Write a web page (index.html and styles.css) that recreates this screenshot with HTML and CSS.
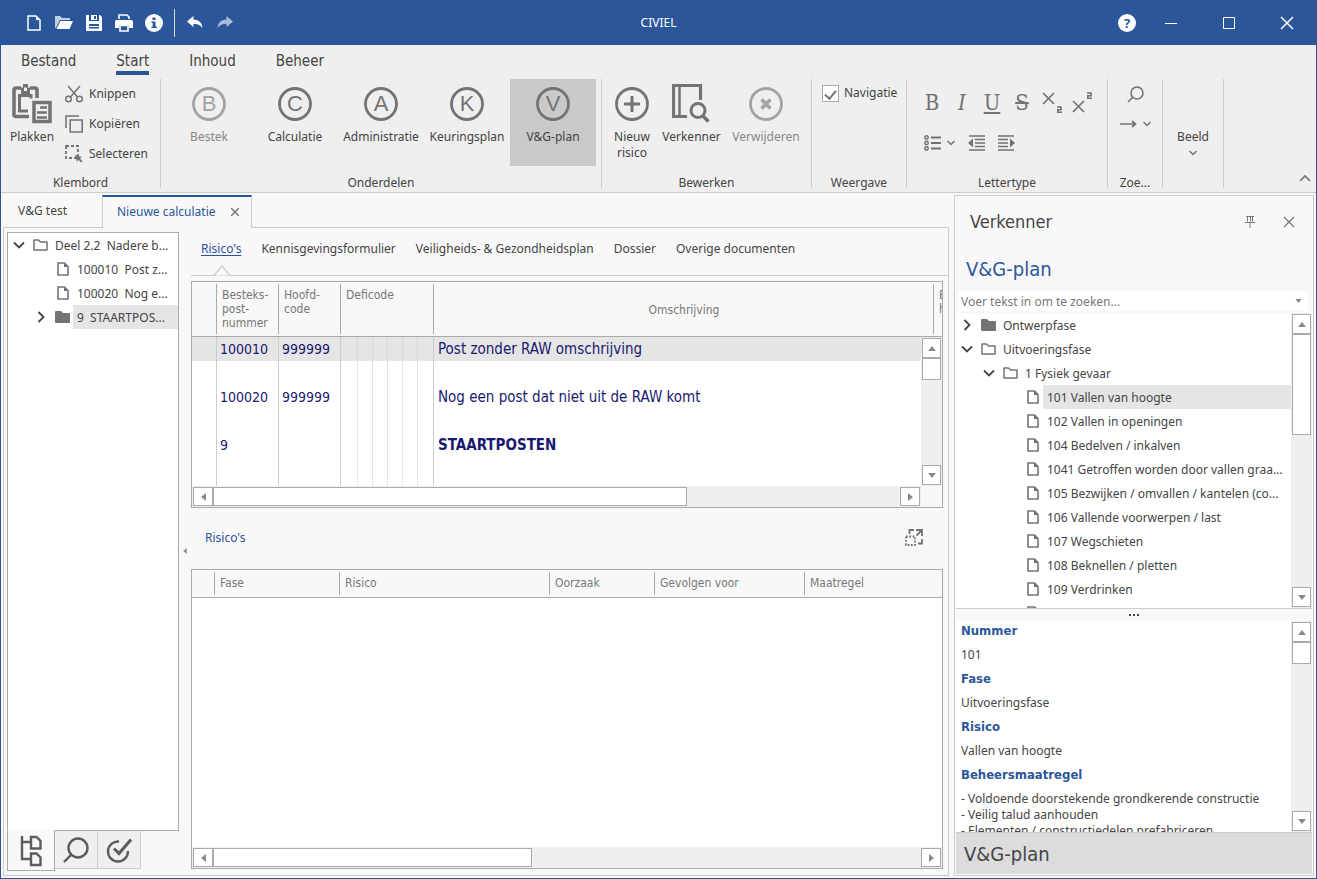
FILE: index.html
```html
<!DOCTYPE html>
<html lang="nl">
<head>
<meta charset="utf-8">
<title>CIVIEL</title>
<link rel="stylesheet" href="styles.css">
</head>
<body>
<svg class="defs" aria-hidden="true">
  <symbol id="doc" viewBox="0 0 12 14"><path d="M1 1h6.500l3.500 3.500V13H1z" fill="none" stroke="#737373" stroke-width="1.600"/><path d="M7 1v4h4z" fill="#737373"/></symbol>
  <symbol id="folder" viewBox="0 0 15 12"><path d="M1 11V1h4.500l2 2H14v8z" fill="none" stroke="#737373" stroke-width="1.500" stroke-linejoin="round"/></symbol>
  <symbol id="folder-full" viewBox="0 0 15 12"><path d="M0 1q0-1 1-1h5l2 2h6q1 0 1 1v8q0 1-1 1H1q-1 0-1-1z" fill="#737373"/></symbol>
  <symbol id="open" viewBox="0 0 12 12"><path d="M1 3.500l5 5 5-5" fill="none" stroke="#444" stroke-width="1.800"/></symbol>
  <symbol id="closed" viewBox="0 0 12 12"><path d="M3.500 1l5 5-5 5" fill="none" stroke="#444" stroke-width="1.800"/></symbol>
  <symbol id="chev" viewBox="0 0 8 6"><path d="M.500 1l3.500 3.500L7.500 1" fill="none" stroke="#737373" stroke-width="1.500"/></symbol>
  <symbol id="ring" viewBox="0 0 34 34"><circle cx="17" cy="17" r="15.500" fill="none" stroke="currentColor" stroke-width="2.800"/></symbol>
  <symbol id="up" viewBox="0 0 8 5"><path d="M0 5l4-5 4 5z" fill="#8a8a8a"/></symbol>
  <symbol id="down" viewBox="0 0 8 5"><path d="M0 0h8L4 5z" fill="#8a8a8a"/></symbol>
  <symbol id="left" viewBox="0 0 5 8"><path d="M5 0v8L0 4z" fill="#8a8a8a"/></symbol>
  <symbol id="right" viewBox="0 0 5 8"><path d="M0 0v8l5-4z" fill="#8a8a8a"/></symbol>
</svg>
<div class="window">
  <header class="titlebar">
    <div class="quick">
      <button class="qbtn" aria-label="Nieuw"><svg width="14" height="16" viewBox="0 0 14 16"><path d="M1 1h8l4 4v10H1z" fill="none" stroke="#fff" stroke-width="1.500"/><path d="M9 1v4h4z" fill="#fff"/></svg></button>
      <button class="qbtn" aria-label="Openen"><svg width="18" height="13" viewBox="0 0 18 13"><path d="M0 12V0h5l2 2h8v2H5L1 12z" fill="#fff" opacity=".7"/><path d="M5.500 5H18l-3.500 8H1.500z" fill="#fff"/></svg></button>
      <button class="qbtn" aria-label="Opslaan"><svg width="16" height="16" viewBox="0 0 16 16"><path d="M0 0h3v6h10V0h1l2 2v14H0zM3 9v4.500h10V9z" fill="#fff" fill-rule="evenodd"/><path d="M5 0h6v5H5zM8 1v3h2V1zM3 11h10v1H3z" fill="#fff" fill-rule="evenodd"/></svg></button>
      <button class="qbtn" aria-label="Afdrukken"><svg width="18" height="18" viewBox="0 0 18 18"><path d="M4 5V1h8l2 2v2" fill="none" stroke="#fff" stroke-width="1.600"/><path d="M1.500 6h15Q18 6 18 8v6h-4v-3H4v3H0V8q0-2 1.500-2z" fill="#fff"/><path d="M5 11.500h8V17H5z" fill="none" stroke="#fff" stroke-width="1.600"/></svg></button>
      <button class="qbtn" aria-label="Informatie"><svg width="18" height="18" viewBox="0 0 18 18"><circle cx="9" cy="9" r="9" fill="#fff"/><path d="M7.500 3.500h3v2.500h-3zM6.500 7.500h4v5H12V14H6.500v-1.500h1.200V9H6.500z" fill="#2b579a"/></svg></button>
      <span class="qsep"></span>
      <button class="qbtn" aria-label="Ongedaan maken"><svg width="16" height="13" viewBox="0 0 16 13"><path d="M0 5.500L6.500 0v3.500C12 3.500 15 7 15.500 12 13 9 10.500 7.800 6.500 7.800V11z" fill="#fff"/></svg></button>
      <button class="qbtn dim" aria-label="Opnieuw"><svg width="16" height="13" viewBox="0 0 16 13"><path d="M16 5.500L9.500 0v3.500C4 3.500 1 7 .500 12 3 9 5.500 7.800 9.500 7.800V11z" fill="#fff"/></svg></button>
    </div>
    <h1 class="app-title">CIVIEL</h1>
    <div class="sys">
      <button class="qbtn" aria-label="Help"><span class="help">?</span></button>
      <button class="sbtn" aria-label="Minimaliseren"><svg width="12" height="12"><path d="M0 6.500h12" stroke="#fff"/></svg></button>
      <button class="sbtn" aria-label="Maximaliseren"><svg width="12" height="12"><path d="M.500.500h11v11H.500z" stroke="#fff" fill="none"/></svg></button>
      <button class="sbtn" aria-label="Sluiten"><svg width="14" height="14"><path d="M1 1l12 12M13 1L1 13" stroke="#fff" stroke-width="1.500"/></svg></button>
    </div>
  </header>

  <nav class="ribbon-tabs">
    <button>Bestand</button><button class="on">Start</button><button>Inhoud</button><button>Beheer</button>
  </nav>
  <div class="ribbon">
    <section class="group g-klem">
      <div class="tools">
        <button class="big"><svg width="40" height="40" viewBox="0 0 40 40" fill="none" stroke="#737373"><path d="M17 32.500H4q-2 0-2-2V6q0-2 2-2h5M18 4h5q2 0 2 2v8" stroke-width="3.600"/><path d="M16 27H7.500V11.500h11.500v3" stroke-width="3"/><path d="M9 3.500h9V10H9z" fill="#737373" stroke="none"/><path d="M11 0h5v5h-5z" fill="#737373" stroke="none"/><path d="M12 3.500h3v3.500h-3z" fill="#efefef" stroke="none"/><path d="M22 18.500h16v19H22z" fill="#efefef" stroke-width="3.500"/><path d="M28 23.500h7M25 28.500h10M25 33.500h10" stroke-width="2.500"/></svg>Plakken</button>
        <div class="stack">
          <button class="small"><svg width="18" height="18" viewBox="0 0 18 18" fill="none" stroke="#737373" stroke-width="1.500"><circle cx="3.500" cy="14" r="2.800"/><circle cx="14.500" cy="14" r="2.800"/><path d="M3 1l9.500 11M15 1L5.500 12"/></svg>Knippen</button>
          <button class="small"><svg width="18" height="18" viewBox="0 0 18 18" fill="none" stroke="#737373" stroke-width="1.600"><path d="M1 13V1h13M5.200 5h12v12h-12z"/></svg>Kopiëren</button>
          <button class="small"><svg width="18" height="18" viewBox="0 0 18 18"><path d="M1 1h12v12H1z" fill="none" stroke="#737373" stroke-width="1.800" stroke-dasharray="3 2"/><path d="M10 10l7 2-2 1.200 2.500 3-1.300 1.300-3-2.700L12 17z" fill="#737373"/></svg>Selecteren</button>
        </div>
      </div>
      <h2>Klembord</h2>
    </section>
    <section class="group g-onder">
      <div class="tools">
        <button class="big dis"><span class="ic"><svg width="34" height="34"><use href="#ring"/></svg><i>B</i></span>Bestek</button>
        <button class="big"><span class="ic"><svg width="34" height="34"><use href="#ring"/></svg><i>C</i></span>Calculatie</button>
        <button class="big"><span class="ic"><svg width="34" height="34"><use href="#ring"/></svg><i>A</i></span>Administratie</button>
        <button class="big"><span class="ic"><svg width="34" height="34"><use href="#ring"/></svg><i>K</i></span>Keuringsplan</button>
        <button class="big active"><span class="ic"><svg width="34" height="34"><use href="#ring"/></svg><i>V</i></span>V&amp;G-plan</button>
      </div>
      <h2>Onderdelen</h2>
    </section>
    <section class="group g-bewerk">
      <div class="tools">
        <button class="big"><svg class="gray" width="34" height="40" viewBox="0 -3 34 40"><circle cx="17" cy="17" r="15.500" fill="none" stroke="currentColor" stroke-width="2.800"/><path d="M17 9v16M9 17h16" stroke="currentColor" stroke-width="3"/></svg>Nieuw<br>risico</button>
        <button class="big"><svg width="40" height="40" viewBox="2 0 40 40" fill="none" stroke="#737373"><path d="M17 32.500H3.500V1.500h27V16" stroke-width="3.200"/><path d="M9.500 2v30" stroke-width="2.500"/><circle cx="28" cy="26.500" r="7" stroke-width="3"/><path d="M32.500 31.500l6 6" stroke-width="3.500"/></svg>Verkenner</button>
        <button class="big dis"><svg class="gray" width="34" height="40" viewBox="0 -3 34 40"><circle cx="17" cy="17" r="15.500" fill="none" stroke="currentColor" stroke-width="2.800"/><path d="M12.500 12.500l9 9M21.500 12.500l-9 9" stroke="currentColor" stroke-width="3.500"/></svg>Verwijderen</button>
      </div>
      <h2>Bewerken</h2>
    </section>
    <section class="group g-weer">
      <div class="tools"><label class="check"><input type="checkbox" checked>Navigatie</label></div>
      <h2>Weergave</h2>
    </section>
    <section class="group g-letter">
      <div class="tools">
        <div class="row">
          <button class="fbtn" aria-label="Vet"><span class="ltr">B</span></button>
          <button class="fbtn" aria-label="Cursief"><span class="ltr it">I</span></button>
          <button class="fbtn" aria-label="Onderstrepen"><span class="ltr un">U</span></button>
          <button class="fbtn" aria-label="Doorhalen"><span class="ltr st">S</span></button>
          <button class="fbtn" aria-label="Subscript"><svg width="20" height="22" viewBox="0 0 20 22"><path d="M1 1l11 11M12 1L1 12" stroke="#737373" stroke-width="1.700"/><path d="M15 15h4v2.700h-3.200v2.500H20" fill="none" stroke="#737373" stroke-width="1.600"/></svg></button>
          <button class="fbtn" aria-label="Superscript"><svg width="20" height="22" viewBox="0 0 20 22"><path d="M1 9l11 11M12 9L1 20" stroke="#737373" stroke-width="1.700"/><path d="M15 1h4v2.700h-3.200v2.500H20" fill="none" stroke="#737373" stroke-width="1.600"/></svg></button>
        </div>
        <div class="row">
          <button class="fbtn wide" aria-label="Opsomming"><svg width="17" height="16" viewBox="0 0 17 16" fill="none" stroke="#737373" stroke-width="1.500"><circle cx="2.500" cy="2.500" r="1.700"/><circle cx="2.500" cy="8" r="1.700"/><circle cx="2.500" cy="13.500" r="1.700"/><path d="M7 2.500h10M7 8h10M7 13.500h10" stroke-width="1.800"/></svg><svg width="8" height="6"><use href="#chev"/></svg></button>
          <button class="fbtn" aria-label="Inspringing verkleinen"><svg width="17" height="16" viewBox="0 0 17 16"><path d="M1 1h16M7 4.500h10M7 8h10M7 11.500h10M1 15h16" stroke="#737373" stroke-width="1.700"/><path d="M5 3.500v9L0 8z" fill="#737373"/></svg></button>
          <button class="fbtn" aria-label="Inspringing vergroten"><svg width="17" height="16" viewBox="0 0 17 16"><path d="M0 1h16M0 4.500h10M0 8h10M0 11.500h10M0 15h16" stroke="#737373" stroke-width="1.700"/><path d="M12 3.500v9L17 8z" fill="#737373"/></svg></button>
        </div>
      </div>
      <h2>Lettertype</h2>
    </section>
    <section class="group g-zoek">
      <div class="tools">
        <button class="zbtn" aria-label="Zoeken"><svg width="17" height="17" viewBox="0 0 17 17" fill="none" stroke="#737373" stroke-width="1.600"><circle cx="10" cy="7" r="6"/><path d="M5.500 11.500L1 16"/></svg></button>
        <button class="zbtn" aria-label="Volgende"><svg width="17" height="8" viewBox="0 0 17 8" fill="none" stroke="#737373" stroke-width="1.700"><path d="M0 4h15M12 1l3.500 3L12 7"/></svg><svg width="8" height="6"><use href="#chev"/></svg></button>
      </div>
      <h2>Zoe...</h2>
    </section>
    <section class="group g-beeld">
      <button class="beeld">Beeld<svg width="8" height="6"><use href="#chev"/></svg></button>
    </section>
    <button class="collapse" aria-label="Lint samenvouwen"><svg width="12" height="8" viewBox="0 0 12 8"><path d="M1 7l5-5 5 5" fill="none" stroke="#737373" stroke-width="1.600"/></svg></button>
  </div>

  <main class="body">
    <section class="left-side">
      <div class="doc-tabs">
        <button class="dtab">V&amp;G test</button>
        <div class="dtab on"><button>Nieuwe calculatie</button><button aria-label="Tabblad sluiten"><svg width="8" height="8"><path d="M0 0l8 8M8 0L0 8" stroke="#777" stroke-width="1.500"/></svg></button></div>
      </div>
      <div class="doc">
        <aside class="nav">
          <ul class="tree nav-tree">
            <li><span class="tw"><svg width="12" height="12"><use href="#open"/></svg></span><span class="ti"><svg width="15" height="12"><use href="#folder"/></svg></span><span class="tl">Deel 2.2  Nadere b...</span></li>
            <li class="l1"><span class="tw"></span><span class="ti"><svg width="12" height="14"><use href="#doc"/></svg></span><span class="tl">100010  Post z...</span></li>
            <li class="l1"><span class="tw"></span><span class="ti"><svg width="12" height="14"><use href="#doc"/></svg></span><span class="tl">100020  Nog e...</span></li>
            <li class="l1"><span class="tw"><svg width="12" height="12"><use href="#closed"/></svg></span><span class="ti"><svg width="15" height="12"><use href="#folder-full"/></svg></span><span class="tl sel">9  STAARTPOS...</span></li>
          </ul>
          <div class="nav-tabs">
            <button class="on" aria-label="Structuur"><svg width="22" height="32" viewBox="0 0 22 32" fill="none" stroke="#5f5b58" stroke-width="2.400"><path d="M2 1v23h8M2 7h8M11 2h5.500l4 4v7.500H11zM11 18.500h5.500l4 4V30H11z"/></svg></button>
            <button aria-label="Zoeken"><svg width="26" height="26" viewBox="0 0 26 26" fill="none" stroke="#5f5b58" stroke-width="2.400"><circle cx="15" cy="11" r="9.500"/><path d="M8 18l-7 7"/></svg></button>
            <button aria-label="Controle"><svg width="26" height="26" viewBox="0 0 26 26" fill="none" stroke="#5f5b58" stroke-width="2.400"><path d="M13 4.500A10 10 0 1 0 22 14"/><path d="M8 11.500l5 5L25 2.500" stroke-width="3"/></svg></button>
          </div>
        </aside>
        <button class="splitter" aria-label="Inklappen"><svg width="4" height="6" viewBox="0 0 5 8"><use href="#left"/></svg></button>
        <div class="content">
          <nav class="subtabs">
            <a href="#risicos" class="on">Risico's<svg width="18" height="11" viewBox="0 0 18 11"><path d="M1 10.500L9 1l8 9.500" fill="#f8f8f8" stroke="#d0d0d0" stroke-width="1.500"/></svg></a><a href="#ken">Kennisgevingsformulier</a><a href="#plan">Veiligheids- &amp; Gezondheidsplan</a><a href="#dossier">Dossier</a><a href="#overige">Overige documenten</a>
          </nav>
          <div class="grid grid-posts">
            <div class="clip">
              <table class="posts">
                <colgroup><col class="c-ind"><col class="c-num"><col class="c-num"><col class="c-def"><col><col class="c-last"></colgroup>
                <thead><tr><th></th><th>Besteks-<br>post-<br>nummer</th><th>Hoofd-<br>code</th><th>Deficode</th><th class="mid">Omschrijving</th><th>Eenh.<br>hoev.</th></tr></thead>
                <tbody>
                  <tr class="sel"><td></td><td>100010</td><td>999999</td><td class="dots"></td><td>Post zonder RAW omschrijving</td><td></td></tr>
                  <tr><td></td><td></td><td></td><td class="dots"></td><td></td><td></td></tr>
                  <tr><td></td><td>100020</td><td>999999</td><td class="dots"></td><td>Nog een post dat niet uit de RAW komt</td><td></td></tr>
                  <tr><td></td><td></td><td></td><td class="dots"></td><td></td><td></td></tr>
                  <tr><td></td><td>9</td><td></td><td class="dots"></td><td><strong>STAARTPOSTEN</strong></td><td></td></tr>
                  <tr><td></td><td></td><td></td><td class="dots"></td><td></td><td></td></tr>
                  <tr><td></td><td></td><td></td><td class="dots"></td><td></td><td></td></tr>
                </tbody>
              </table>
              <div class="vscroll over"><button aria-label="Omhoog"><svg width="8" height="5"><use href="#up"/></svg></button><div class="track"><div class="thumb t-min"></div></div><button aria-label="Omlaag"><svg width="8" height="5"><use href="#down"/></svg></button></div>
            </div>
            <div class="hscroll corner"><button aria-label="Naar links"><svg width="5" height="8"><use href="#left"/></svg></button><div class="track"><div class="thumb t-wide"></div></div><button aria-label="Naar rechts"><svg width="5" height="8"><use href="#right"/></svg></button></div>
          </div>
          <div class="sub-head"><h2>Risico's</h2><button aria-label="Vergroten"><svg width="18" height="17" viewBox="0 0 18 17" fill="none" stroke="#737373" stroke-width="1.800"><path d="M4.500 5V1H9M11 1h6v6M17 1l-5.500 5.500M17 10v4.500h-4"/><path d="M1 7.500h9V16H1z" stroke-dasharray="1.800 1.500"/></svg></button></div>
          <div class="grid grid-risk">
            <div class="clip">
              <table class="risks">
                <colgroup><col class="r-ind"><col class="r-fase"><col class="r-risico"><col class="r-oor"><col class="r-gev"><col></colgroup>
                <thead><tr><th></th><th>Fase</th><th>Risico</th><th>Oorzaak</th><th>Gevolgen voor</th><th>Maatregel</th></tr></thead>
              </table>
            </div>
            <div class="hscroll"><button aria-label="Naar links"><svg width="5" height="8"><use href="#left"/></svg></button><div class="track"><div class="thumb t-half"></div></div><button aria-label="Naar rechts"><svg width="5" height="8"><use href="#right"/></svg></button></div>
          </div>
        </div>
      </div>
    </section>

    <aside class="explorer">
      <header class="ex-head"><h2>Verkenner</h2><button aria-label="Vastzetten"><svg width="10" height="12" viewBox="0 0 10 12" fill="none" stroke="#777"><path d="M1 .500h8M2.500 1v4.500M7.500 1v4.500M0 6.500h10M5 7v5M5.500 1v4.500"/></svg></button><button aria-label="Sluiten"><svg width="12" height="12"><path d="M1 1l10 10M11 1L1 11" stroke="#777" stroke-width="1.200"/></svg></button></header>
      <h3 class="ex-title">V&amp;G-plan</h3>
      <div class="search"><input type="text" aria-label="Zoeken" placeholder="Voer tekst in om te zoeken..."><button aria-label="Zoekopties"><svg width="7" height="4" viewBox="0 0 8 5"><use href="#down"/></svg></button></div>
      <div class="pane ex-tree">
        <ul class="tree">
          <li><span class="tw"><svg width="12" height="12"><use href="#closed"/></svg></span><span class="ti"><svg width="15" height="12"><use href="#folder-full"/></svg></span><span class="tl">Ontwerpfase</span></li>
          <li><span class="tw"><svg width="12" height="12"><use href="#open"/></svg></span><span class="ti"><svg width="15" height="12"><use href="#folder"/></svg></span><span class="tl">Uitvoeringsfase</span></li>
          <li class="l1"><span class="tw"><svg width="12" height="12"><use href="#open"/></svg></span><span class="ti"><svg width="15" height="12"><use href="#folder"/></svg></span><span class="tl">1 Fysiek gevaar</span></li>
          <li class="l2"><span class="tw"></span><span class="ti"><svg width="12" height="14"><use href="#doc"/></svg></span><span class="tl sel">101 Vallen van hoogte</span></li>
          <li class="l2"><span class="tw"></span><span class="ti"><svg width="12" height="14"><use href="#doc"/></svg></span><span class="tl">102 Vallen in openingen</span></li>
          <li class="l2"><span class="tw"></span><span class="ti"><svg width="12" height="14"><use href="#doc"/></svg></span><span class="tl">104 Bedelven / inkalven</span></li>
          <li class="l2"><span class="tw"></span><span class="ti"><svg width="12" height="14"><use href="#doc"/></svg></span><span class="tl">1041 Getroffen worden door vallen graa...</span></li>
          <li class="l2"><span class="tw"></span><span class="ti"><svg width="12" height="14"><use href="#doc"/></svg></span><span class="tl">105 Bezwijken / omvallen / kantelen (co...</span></li>
          <li class="l2"><span class="tw"></span><span class="ti"><svg width="12" height="14"><use href="#doc"/></svg></span><span class="tl">106 Vallende voorwerpen / last</span></li>
          <li class="l2"><span class="tw"></span><span class="ti"><svg width="12" height="14"><use href="#doc"/></svg></span><span class="tl">107 Wegschieten</span></li>
          <li class="l2"><span class="tw"></span><span class="ti"><svg width="12" height="14"><use href="#doc"/></svg></span><span class="tl">108 Beknellen / pletten</span></li>
          <li class="l2"><span class="tw"></span><span class="ti"><svg width="12" height="14"><use href="#doc"/></svg></span><span class="tl">109 Verdrinken</span></li>
          <li class="l2"><span class="tw"></span><span class="ti"><svg width="12" height="14"><use href="#doc"/></svg></span></li>
        </ul>
        <div class="vscroll"><button aria-label="Omhoog"><svg width="8" height="5"><use href="#up"/></svg></button><div class="track"><div class="thumb t-tree"></div></div><button aria-label="Omlaag"><svg width="8" height="5"><use href="#down"/></svg></button></div>
      </div>
      <div class="grip"><svg width="10" height="2"><path d="M0 1h2M4 1h2M8 1h2" stroke="#444" stroke-width="2"/></svg></div>
      <div class="pane ex-detail">
        <dl>
          <dt>Nummer</dt><dd>101</dd>
          <dt>Fase</dt><dd>Uitvoeringsfase</dd>
          <dt>Risico</dt><dd>Vallen van hoogte</dd>
          <dt>Beheersmaatregel</dt><dd>- Voldoende doorstekende grondkerende constructie<br>- Veilig talud aanhouden<br>- Elementen / constructiedelen prefabriceren</dd>
        </dl>
        <div class="vscroll"><button aria-label="Omhoog"><svg width="8" height="5"><use href="#up"/></svg></button><div class="track"><div class="thumb t-min"></div></div><button aria-label="Omlaag"><svg width="8" height="5"><use href="#down"/></svg></button></div>
      </div>
      <footer class="ex-foot">V&amp;G-plan</footer>
    </aside>
  </main>
</div>
</body>
</html>
```
FILE: styles.css
```css
* { box-sizing: border-box; }
body { margin: 0; font: 12px/16px "Noto Sans", "DejaVu Sans Condensed", sans-serif; color: #444; }
h1, h2, h3, ul, dl, dd { margin: 0; padding: 0; font-weight: normal; font-size: 12px; }
ul { list-style: none; }
button { font: inherit; color: inherit; background: none; border: 0; padding: 0; }
svg { display: block; flex: none; }
.defs { position: absolute; width: 0; height: 0; }

.window { height: 100vh; display: flex; flex-direction: column; background: #f8f8f8; border: 1px solid #2b579a; border-top: 0; overflow: hidden; }

/* title bar */
.titlebar { flex: none; height: 45px; background: #2b579a; color: #fff; display: grid; grid-template-columns: 1fr auto 1fr; align-items: center; }
.quick { display: flex; align-items: center; padding-left: 18px; }
.qbtn { width: 30px; height: 30px; display: flex; align-items: center; justify-content: center; }
.qbtn.dim { opacity: .6; }
.qsep { width: 1px; height: 28px; margin: 0 5px; background: #d8d8d0; }
.sys { display: flex; justify-content: flex-end; align-items: center; }
.sbtn { width: 58px; height: 30px; display: flex; align-items: center; justify-content: center; }
.help { width: 18px; height: 18px; border-radius: 9px; background: #fff; color: #2b579a; font-weight: bold; font-size: 13px; line-height: 18px; }

/* ribbon */
.ribbon-tabs { flex: none; height: 33px; padding: 2px 0 0 20px; display: flex; gap: 40px; align-items: flex-start; background: #efefef; font: 15px "DejaVu Sans Condensed", sans-serif; }
.ribbon-tabs button { border-bottom: 4px solid #efefef; height: 28px; line-height: 24px; padding-top: 2px; }
.ribbon-tabs .on { border-color: #2b579a; }
.ribbon { flex: none; height: 115px; display: flex; background: #efefef; border-bottom: 1px solid #ccc; padding-bottom: 4px; }
.group { flex: none; border-right: 1px solid #ccc; display: flex; flex-direction: column; margin-top: 1px; }
.group h2 { margin-top: auto; text-align: center; line-height: 10px; }
.tools { display: flex; }
.g-klem { width: 160px; }
.g-onder { width: 441px; }
.g-onder .tools { padding-left: 5px; }
.g-bewerk { width: 210px; }
.g-bewerk .tools { padding-left: 4px; }
.g-weer { width: 95px; }
.g-letter { width: 201px; }
.g-letter .tools { flex-direction: column; padding: 9px 0 0 10px; }
.g-zoek { width: 55px; }
.g-zoek .tools { flex-direction: column; }
.g-beeld { width: 61px; }
.big { width: 86px; height: 87px; display: flex; flex-direction: column; align-items: center; padding-top: 5px; }
.big > svg, .big .ic { height: 40px; margin-bottom: 5px; }
.g-klem .big { width: 62px; }
.g-bewerk .big:nth-child(1) { width: 52px; }
.g-bewerk .big:nth-child(2) { width: 67px; }
.g-bewerk .big:nth-child(3) { width: 82px; }
.ic { display: grid; place-items: center; color: #737373; }
.ic > * { grid-area: 1 / 1; }
.ic i { font: 22px/22px "Liberation Sans", sans-serif; }
.gray { color: #737373; }
.dis { color: #888; }
.dis .ic, .dis .gray { color: #a3a3a3; }
.big.active { background: #c9c9c9; }
.stack { display: flex; flex-direction: column; }
.small { height: 30px; display: flex; align-items: center; gap: 6px; padding-left: 2px; }
.check { display: flex; align-items: center; gap: 5px; padding: 5px 0 0 10px; line-height: 18px; }
.check input { appearance: none; margin: 0; width: 17px; height: 17px; border: 1px solid #aaa; background: #fff; display: grid; justify-content: center; }
.check input:checked::before { content: ""; width: 5px; height: 9px; margin-top: 2px; border: solid #737373; border-width: 0 2px 2px 0; transform: rotate(40deg); }
.row { display: flex; height: 40px; }
.fbtn { width: 30px; height: 30px; display: flex; align-items: center; justify-content: center; }
.fbtn.wide { width: 44px; gap: 6px; }
.ltr { font: 22px/24px "DejaVu Serif Condensed", "DejaVu Serif", serif; color: #737373; }
.it { font-style: italic; }
.un { text-decoration: underline; }
.st { text-decoration: line-through; }
.zbtn { height: 30px; display: flex; align-items: center; justify-content: center; gap: 6px; }
.beeld { flex: 1; display: flex; flex-direction: column; align-items: center; gap: 5px; padding-top: 50px; }
.collapse { margin: auto 5px 6px auto; }

/* work area */
.body { flex: 1; min-height: 0; display: grid; grid-template-columns: minmax(0, 1fr) 360px; gap: 5px; padding: 2px; }
.left-side { min-width: 0; min-height: 0; display: flex; flex-direction: column; }
.doc-tabs { flex: none; height: 33px; display: flex; border-bottom: 1px solid #ccc; }
.dtab { width: 99px; padding-left: 15px; text-align: left; }
.dtab.on { width: 150px; display: flex; align-items: center; justify-content: space-between; height: 33px; padding: 0 12px 2px 14px; border: 1px solid #ccc; border-top: 2px solid #2b579a; border-bottom: 0; background: #f8f8f8; color: #2b579a; }
.doc { flex: 1; min-height: 0; display: flex; border: 1px solid #ccc; border-top: 0; padding: 4px 0 6px 3px; }
.nav { flex: none; width: 172px; display: flex; flex-direction: column; margin-bottom: -2px; }
.nav-tree { flex: 1; background: #fff; border: 1px solid #aaa; overflow: hidden; }
.nav-tabs { flex: none; height: 41px; margin-top: -1px; display: flex; align-items: flex-start; }
.nav-tabs button { height: 39px; width: 43px; display: flex; align-items: center; justify-content: center; background: #efefef; border: 1px solid #ccc; border-top-color: #aaa; border-left: 0; }
.nav-tabs .on { width: 48px; height: 41px; background: #f8f8f8; border: 1px solid #aaa; border-top-color: #f8f8f8; }
.tree li { display: flex; height: 24px; line-height: 26px; white-space: pre; }
.l1 { padding-left: 22px; }
.l2 { padding-left: 44px; }
.tw { flex: none; width: 22px; display: flex; align-items: center; justify-content: center; }
.ti { flex: none; width: 21px; display: flex; align-items: center; justify-content: center; }
.tl { flex: 1; min-width: 0; padding-left: 4px; overflow: hidden; }
.tl.sel { background: #e5e5e5; }
.splitter { flex: none; width: 12px; display: flex; align-items: center; justify-content: center; }
.content { flex: 1; min-width: 0; display: flex; flex-direction: column; }
.subtabs { flex: none; height: 44px; display: flex; gap: 20px; padding: 9px 0 0 10px; border-bottom: 1px solid #ccc; }
.subtabs a { color: #444; text-decoration: none; position: relative; }
.subtabs .on { color: #2a5298; text-decoration: underline; text-underline-offset: 2px; }
.subtabs svg { position: absolute; left: 50%; margin-left: -8px; top: 24px; }
.grid { margin-right: 5px; border: 1px solid #aaa; display: flex; flex-direction: column; background: #f8f8f8; }
.grid-posts { flex: none; height: 227px; margin-top: 5px; }
.grid-risk { flex: 1; min-height: 0; }
.clip { flex: 1; min-height: 0; position: relative; overflow: hidden; background: #fff; }
table { table-layout: fixed; border-collapse: separate; border-spacing: 0; }
.posts { width: calc(100% + 60px); }
.risks { width: 100%; }
.c-ind { width: 25px; }
.c-num { width: 62px; }
.c-def { width: 93px; }
.c-last { width: 68px; }
.r-ind { width: 23px; }
.r-fase { width: 125px; }
.r-risico { width: 210px; }
.r-oor { width: 105px; }
.r-gev { width: 150px; }
th { font: 12px/14px "DejaVu Sans Condensed", sans-serif; text-align: left; color: #777; vertical-align: top; padding: 6px 5px 0; background: #f8f8f8 linear-gradient(#aaa, #aaa) no-repeat right center / 1px calc(100% - 4px); border-bottom: 1px solid #aaa; }
th:last-child { background-image: none; }
.posts th { height: 55px; }
.posts .mid { text-align: center; vertical-align: middle; padding-top: 2px; }
.risks th { height: 28px; }
td { height: 24px; padding: 0 3px; border-right: 1px solid #ccc; font: 14px/23px "DejaVu Sans Condensed", sans-serif; color: #191970; white-space: nowrap; background: #fff; }
td:nth-child(5) { border-right: 0; padding-left: 4px; font-size: 15px; }
.sel td { background-color: #e5e5e5; }
td.dots { background-image: repeating-linear-gradient(#ccc 0 1px, transparent 1px 2px), repeating-linear-gradient(#ccc 0 1px, transparent 1px 2px), repeating-linear-gradient(#ccc 0 1px, transparent 1px 2px), repeating-linear-gradient(#ccc 0 1px, transparent 1px 2px), repeating-linear-gradient(#ccc 0 1px, transparent 1px 2px); background-size: 1px 100%; background-repeat: no-repeat; background-position: 16px 0, 31px 0, 46px 0, 61px 0, 76px 0; }
.sub-head { flex: none; height: 61px; display: flex; align-items: center; justify-content: space-between; padding: 0 25px 2px 14px; color: #2a5298; }

/* scroll bars */
.vscroll, .hscroll { flex: none; display: flex; background: #efefef; padding: 1px; }
.vscroll { width: 21px; flex-direction: column; }
.hscroll { height: 21px; }
.vscroll.over { position: absolute; right: 0; top: 55px; bottom: 0; }
.vscroll button, .hscroll button { flex: none; background: #fff; border: 1px solid #aaa; display: flex; align-items: center; justify-content: center; }
.vscroll button { height: 20px; }
.hscroll button { width: 20px; }
.hscroll.corner { margin-right: 21px; }
.track { flex: 1; display: flex; }
.vscroll .track { flex-direction: column; }
.thumb { background: #fff; border: 1px solid #aaa; }
.t-min { height: 22px; }
.t-tree { height: 40%; }
.t-wide { width: 69%; }
.t-half { width: 45%; }

/* explorer */
.explorer { min-height: 0; border: 1px solid #ccc; padding: 0 1px 1px; display: flex; flex-direction: column; }
.ex-head { flex: none; height: 52px; display: flex; align-items: center; gap: 28px; padding: 0 17px 0 14px; }
.ex-head h2 { flex: 1; font: 18px/24px "DejaVu Sans Condensed", sans-serif; }
.ex-title { flex: none; height: 43px; padding-left: 10px; font: 20px/43px "DejaVu Sans Condensed", sans-serif; color: #2b579a; }
.search { flex: none; height: 20px; margin: 0 4px 2px 2px; display: flex; background: #fff; }
.search input { flex: 1; min-width: 0; border: 0; padding: 1px 3px 0; font: inherit; background: none; }
.search input::placeholder { color: #777; opacity: 1; }
.search button { padding: 0 6px; }
.pane { display: flex; background: #fff; overflow: hidden; }
.ex-tree { flex: 296 1 0; min-height: 0; border-bottom: 1px solid #ccc; }
.ex-tree .tree { flex: 1; min-width: 0; }
.grip { flex: none; height: 12px; display: flex; align-items: center; justify-content: center; }
.ex-detail { flex: 211 1 0; min-height: 0; }
dl { flex: 1; padding: 2px 0 0 5px; }
dt, dd { margin-bottom: 8px; }
dt { font: bold 13px/16px "DejaVu Sans Condensed", sans-serif; color: #2b579a; }
.ex-foot { flex: none; height: 42px; padding-left: 8px; background: #dcdcdc; border-top: 1px solid #ccc; font: 20px/42px "DejaVu Sans Condensed", sans-serif; }
```
